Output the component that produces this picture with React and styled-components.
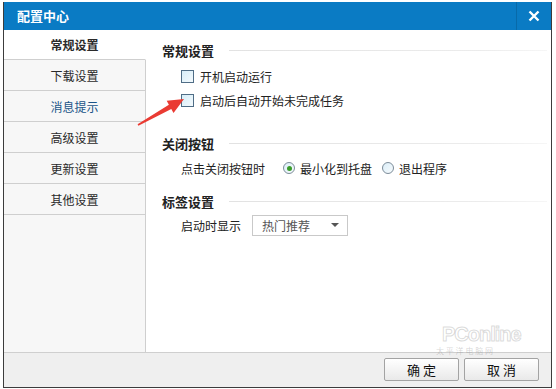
import React from 'react';
import styled, { createGlobalStyle } from 'styled-components';

const GlobalStyle = createGlobalStyle`
  html, body {
    margin: 0;
    padding: 0;
    background: #ffffff;
  }
  body {
    font-family: "Noto Sans CJK SC", "Noto Sans", sans-serif;
    font-size: 12px;
    color: #333;
  }
`;

const tabs = ['常规设置', '下载设置', '消息提示', '高级设置', '更新设置', '其他设置'];

const App = () => {
  return (
    <>
      <GlobalStyle />
      <Window>
        <TitleBar>
          <Title>配置中心</Title>
          <CloseButton>
            <svg width="12" height="12" viewBox="0 0 12 12">
              <path d="M1.5 1.5 L10.5 10.5 M10.5 1.5 L1.5 10.5" stroke="#fff" strokeWidth="2.4" />
            </svg>
          </CloseButton>
        </TitleBar>

        <Body>
          <Sidebar>
            {tabs.map((t, i) => (
              <Tab key={t} active={i === 0} first={i === 0} hover={t === '消息提示'}>
                {t}
              </Tab>
            ))}
            <SidebarFill />
          </Sidebar>

          <Content>
            <Heading>
              <span>常规设置</span>
              <Rule />
            </Heading>
            <Row top={6}>
              <Checkbox />
              <span>开机启动运行</span>
            </Row>
            <Row top={4}>
              <Checkbox />
              <span>启动后自动开始未完成任务</span>
            </Row>

            <Heading top={23}>
              <span>关闭按钮</span>
              <Rule />
            </Heading>
            <Row top={5}>
              <Label>点击关闭按钮时</Label>
              <Radio checked />
              <RadioText>最小化到托盘</RadioText>
              <Radio />
              <RadioText>退出程序</RadioText>
            </Row>

            <Heading top={13}>
              <span>标签设置</span>
              <Rule />
            </Heading>
            <Row top={4}>
              <Label>启动时显示</Label>
              <Select>
                <span>热门推荐</span>
                <Caret />
              </Select>
            </Row>
          </Content>
        </Body>

        <Footer>
          <Button>确&nbsp;定</Button>
          <Button>取&nbsp;消</Button>
        </Footer>

        <Watermark>
          <Brand>PConline</Brand>
          <BrandSub>太 平 洋 电 脑 网</BrandSub>
        </Watermark>

        <Arrow width="200" height="140" viewBox="0 0 200 140">
          <polygon
            points="133.6,122.3 164.9,102.7 162.7,98.8 180,97 169.5,111 167.3,107.1 134.4,123.7"
            fill="#ea3b33"
          />
        </Arrow>
      </Window>
    </>
  );
};

export default App;

const Window = styled.div`
  position: relative;
  box-sizing: border-box;
  margin: 2px 0 0 3px;
  width: 549px;
  height: 386px;
  border: 1px solid #3c3c3c;
  border-top: none;
  display: flex;
  flex-direction: column;
  background: #fff;
  overflow: hidden;
`;

const TitleBar = styled.div`
  height: 28px;
  flex-shrink: 0;
  background: #0a7bc4;
  display: flex;
  align-items: center;
  justify-content: space-between;
`;

const Title = styled.div`
  padding-left: 13px;
  color: #fff;
  font-size: 13px;
  font-weight: bold;
  line-height: 28px;
`;

const CloseButton = styled.div`
  width: 34px;
  height: 28px;
  border-left: 1px solid #086aa9;
  display: flex;
  align-items: center;
  justify-content: center;
`;

const Body = styled.div`
  flex: 1;
  display: flex;
  min-height: 0;
`;

const Sidebar = styled.div`
  width: 142px;
  flex-shrink: 0;
  display: flex;
  flex-direction: column;
  background: #f7f7f7;
`;

const Tab = styled.div`
  box-sizing: border-box;
  height: ${({ first }) => (first ? 30 : 31)}px;
  border-bottom: 1px solid #cfcfcf;
  border-right: 1px solid ${({ active }) => (active ? 'transparent' : '#cfcfcf')};
  background: ${({ active }) => (active ? '#fff' : '#f7f7f7')};
  font-weight: ${({ active }) => (active ? 'bold' : 'normal')};
  color: ${({ hover }) => (hover ? '#1a5488' : '#2a2a2a')};
  display: flex;
  align-items: center;
  justify-content: center;
  font-size: 12px;
`;

const SidebarFill = styled.div`
  flex: 1;
  border-right: 1px solid #cfcfcf;
`;

const Content = styled.div`
  flex: 1;
  padding: 10px 0 0 16px;
  display: flex;
  flex-direction: column;
`;

const Heading = styled.div`
  height: 20px;
  margin-top: ${({ top }) => top || 0}px;
  display: flex;
  align-items: center;
  gap: 15px;
  font-weight: bold;
  font-size: 13px;
  color: #222;
`;

const Rule = styled.div`
  flex: 1;
  height: 1px;
  margin-right: 4px;
  background: linear-gradient(to right, #e2e2e2, #ececec 80%, #f6f6f6);
`;

const Row = styled.div`
  height: 20px;
  margin-top: ${({ top }) => top || 0}px;
  padding-left: 19px;
  display: flex;
  align-items: center;
  color: #222;
`;

const Checkbox = styled.span`
  box-sizing: border-box;
  width: 13px;
  height: 13px;
  margin-right: 6px;
  border: 1px solid #4f6d86;
  background: linear-gradient(135deg, #d6edf8, #f4fafd);
`;

const Label = styled.span`
  margin-right: 18px;
`;

const Radio = styled.span`
  box-sizing: border-box;
  width: 12px;
  height: 12px;
  border-radius: 50%;
  border: 1px solid #7c8c99;
  background: linear-gradient(135deg, #dbeef8, #f7fbfd);
  margin-right: 5px;
  display: flex;
  align-items: center;
  justify-content: center;
  &::after {
    content: '';
    display: ${({ checked }) => (checked ? 'block' : 'none')};
    width: 5px;
    height: 5px;
    border-radius: 50%;
    background: #3a9c2a;
  }
`;

const RadioText = styled.span`
  margin-right: 10px;
`;

const Select = styled.div`
  box-sizing: border-box;
  width: 96px;
  height: 21px;
  margin-left: -7px;
  border: 1px solid #c9c9c9;
  padding: 0 8px 0 9px;
  display: flex;
  align-items: center;
  justify-content: space-between;
  color: #555;
`;

const Caret = styled.span`
  width: 0;
  height: 0;
  border-left: 4px solid transparent;
  border-right: 4px solid transparent;
  border-top: 4px solid #555;
`;

const Footer = styled.div`
  box-sizing: border-box;
  height: 35px;
  flex-shrink: 0;
  border-top: 1px solid #cfcfcf;
  background: #efefef;
  padding: 5px 12px 0 0;
  display: flex;
  justify-content: flex-end;
  align-items: flex-start;
  gap: 5px;
`;

const Button = styled.div`
  box-sizing: border-box;
  width: 75px;
  height: 23px;
  border: 1px solid #a3a3a3;
  border-radius: 2px;
  background: linear-gradient(#ffffff, #e9e9e9);
  display: flex;
  align-items: center;
  justify-content: center;
  font-size: 13px;
  color: #111;
  position: relative;
  z-index: 1;
`;

const Watermark = styled.div`
  position: absolute;
  left: 438px;
  top: 322px;
  display: flex;
  flex-direction: column;
  align-items: flex-start;
  gap: 2px;
  pointer-events: none;
  z-index: 2;
`;

const Brand = styled.div`
  font-family: "Liberation Sans", Arial, sans-serif;
  font-size: 20px;
  font-weight: bold;
  letter-spacing: -1px;
  color: rgba(255, 255, 255, 0.85);
  -webkit-text-stroke: 1px rgba(150, 150, 150, 0.35);
  line-height: 20px;
  height: 20px;
`;

const BrandSub = styled.div`
  margin-left: -6px;
  font-size: 8px;
  line-height: 10px;
  height: 10px;
  color: rgba(120, 120, 120, 0.3);
`;

const Arrow = styled.svg`
  position: absolute;
  left: 0;
  top: 0;
  pointer-events: none;
  z-index: 3;
`;
